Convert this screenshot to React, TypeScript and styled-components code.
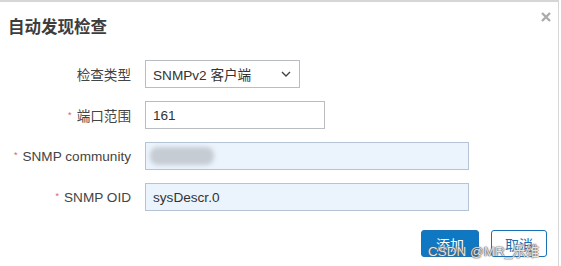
import styled, { createGlobalStyle } from 'styled-components';

const Global = createGlobalStyle`
  html, body {
    margin: 0;
    padding: 0;
    background: #ffffff;
  }
  body {
    font-family: "Liberation Sans", "Noto Sans CJK SC", sans-serif;
  }
`;

const Dialog = styled.div`
  position: relative;
  width: 559px;
  height: 266px;
  box-sizing: border-box;
  border-top: 2px solid #d4d6d8;
  border-right: 1px solid #d4d6d8;
  background: #fff;
  overflow: hidden;
`;

const Header = styled.div`
  display: flex;
  justify-content: space-between;
  align-items: flex-start;
  padding: 14px 6px 0 8px;
`;

const Title = styled.div`
  font-size: 16.5px;
  line-height: 22px;
  font-weight: bold;
  color: #3d3d3d;
`;

const Close = styled.div`
  margin-top: -7px;
  width: 12px;
  height: 12px;
`;

const Form = styled.div`
  display: grid;
  grid-template-columns: 131px 1fr;
  column-gap: 14px;
  row-gap: 13px;
  margin-top: 22px;
  align-items: center;
`;

const Label = styled.div`
  text-align: right;
  font-size: 13.6px;
  color: #444;
  white-space: nowrap;
`;

const Star = styled.span`
  color: #e0606a;
  font-size: 9px;
  margin-right: 5px;
  vertical-align: 3px;
`;

const Field = styled.div<{ w: number; tint?: boolean }>`
  position: relative;
  width: ${(p) => p.w}px;
  height: 28px;
  box-sizing: border-box;
  border: 1px solid ${(p) => (p.tint ? '#b4c4d4' : '#b9bcc0')};
  background: ${(p) => (p.tint ? '#ebf3fd' : '#ffffff')};
  display: flex;
  align-items: center;
  justify-content: space-between;
  padding: 0 8px 0 7px;
  font-size: 13.6px;
  color: #333;
`;

const Blur = styled.div`
  width: 64px;
  height: 18px;
  margin-left: -3px;
  border-radius: 8px;
  background: #c6ccd3;
  filter: blur(2px);
`;

const Actions = styled.div`
  display: flex;
  justify-content: flex-end;
  gap: 12px;
  margin-top: 19px;
  padding-right: 11px;
`;

const Button = styled.div<{ primary?: boolean; w: number }>`
  width: ${(p) => p.w}px;
  height: 27px;
  box-sizing: border-box;
  border-radius: 3px;
  border: 1px solid #1a73b8;
  background: ${(p) => (p.primary ? '#0f78c2' : '#ffffff')};
  color: ${(p) => (p.primary ? '#ffffff' : '#1a6fb3')};
  font-size: 14px;
  display: flex;
  align-items: center;
  justify-content: center;
`;

const Watermark = styled.div`
  position: absolute;
  left: 428px;
  top: 238px;
  font-size: 13.5px;
  color: rgba(255, 255, 255, 0.85);
  text-shadow: 0 0 1px #555, 0 0 1px #555, 0 0 2px #777;
  white-space: nowrap;
  pointer-events: none;
`;

function Chevron() {
  return (
    <svg width="10" height="6" viewBox="0 0 10 6">
      <path d="M1 1l4 4 4-4" fill="none" stroke="#444" strokeWidth="1.4" />
    </svg>
  );
}

export default function App() {
  return (
    <>
      <Global />
      <Dialog>
        <Header>
          <Title>自动发现检查</Title>
          <Close>
            <svg width="12" height="12" viewBox="0 0 12 12">
              <path d="M2 2l8 8M10 2l-8 8" stroke="#a9abad" strokeWidth="2.4" />
            </svg>
          </Close>
        </Header>
        <Form>
          <Label>检查类型</Label>
          <Field w={155}>
            <span>SNMPv2 客户端</span>
            <Chevron />
          </Field>
          <Label>
            <Star>*</Star>端口范围
          </Label>
          <Field w={180}>161</Field>
          <Label>
            <Star>*</Star>SNMP community
          </Label>
          <Field w={324} tint>
            <Blur />
          </Field>
          <Label>
            <Star>*</Star>SNMP OID
          </Label>
          <Field w={324} tint>
            sysDescr.0
          </Field>
        </Form>
        <Actions>
          <Button primary w={58}>添加</Button>
          <Button w={56}>取消</Button>
        </Actions>
        <Watermark>CSDN @MR_乐维</Watermark>
      </Dialog>
    </>
  );
}
